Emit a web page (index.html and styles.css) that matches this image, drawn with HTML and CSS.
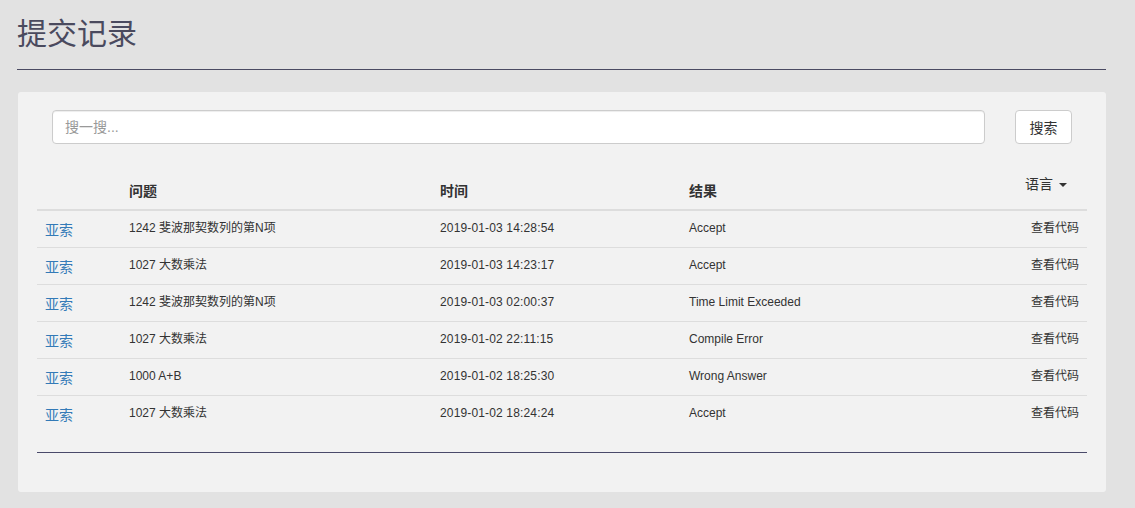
FILE: index.html
```html
<!DOCTYPE html>
<html lang="zh">
<head>
<meta charset="utf-8">
<title>提交记录</title>
<link rel="stylesheet" href="styles.css">
</head>
<body>
<div class="page">
  <h1 class="title">提交记录</h1>
  <hr class="rule">
  <div class="panel">
    <form class="search">
      <input class="search-input" type="text" placeholder="搜一搜...">
      <button class="search-btn" type="button">搜索</button>
    </form>
    <table class="records">
      <thead>
        <tr>
          <th class="c-user"></th>
          <th class="c-prob">问题</th>
          <th class="c-time">时间</th>
          <th class="c-res">结果</th>
          <th class="c-lang"><span class="lang">语言 <span class="caret"></span></span></th>
        </tr>
      </thead>
      <tbody>
        <tr><td><a class="user" href="#">亚索</a></td><td>1242 斐波那契数列的第N项</td><td class="time">2019-01-03 14:28:54</td><td>Accept</td><td class="code">查看代码</td></tr>
        <tr><td><a class="user" href="#">亚索</a></td><td>1027 大数乘法</td><td class="time">2019-01-03 14:23:17</td><td>Accept</td><td class="code">查看代码</td></tr>
        <tr><td><a class="user" href="#">亚索</a></td><td>1242 斐波那契数列的第N项</td><td class="time">2019-01-03 02:00:37</td><td>Time Limit Exceeded</td><td class="code">查看代码</td></tr>
        <tr><td><a class="user" href="#">亚索</a></td><td>1027 大数乘法</td><td class="time">2019-01-02 22:11:15</td><td>Compile Error</td><td class="code">查看代码</td></tr>
        <tr><td><a class="user" href="#">亚索</a></td><td>1000 A+B</td><td class="time">2019-01-02 18:25:30</td><td>Wrong Answer</td><td class="code">查看代码</td></tr>
        <tr><td><a class="user" href="#">亚索</a></td><td>1027 大数乘法</td><td class="time">2019-01-02 18:24:24</td><td>Accept</td><td class="code">查看代码</td></tr>
      </tbody>
    </table>
    <hr class="table-end">
  </div>
</div>
</body>
</html>
```

FILE: styles.css
```css
* { box-sizing: border-box; }
html, body {
  margin: 0;
  padding: 0;
  background: #e2e2e2;
}
body {
  font-family: "Liberation Sans", Arial, "Noto Sans CJK SC", sans-serif;
  font-size: 14px;
  line-height: 1.42857;
  color: #333;
}
.page {
  margin-left: 17px;
  width: 1089px;
  padding-top: 15px;
}
.title {
  margin: 0;
  font-size: 30px;
  font-weight: normal;
  line-height: 38px;
  color: #4a4a5e;
}
.rule {
  margin: 16px 0 0 0;
  border: 0;
  border-top: 1px solid #4a4a62;
  height: 0;
}
.panel {
  margin: 22px 0 0 1px;
  background: #f2f2f2;
  border-radius: 3px;
  padding: 18px 19px 39px 19px;
}
.search {
  display: flex;
  align-items: center;
  margin: 0 15px 0 15px;
  gap: 30px;
}
.search-input {
  flex: 1;
  height: 34px;
  border: 1px solid #ccc;
  border-radius: 4px;
  background: #fff;
  padding: 6px 12px;
  font-family: inherit;
  font-size: 14px;
  color: #555;
  box-shadow: inset 0 1px 1px rgba(0,0,0,.075);
}
.search-input::placeholder { color: #999; }
.search-btn {
  width: 57px;
  height: 34px;
  border: 1px solid #ccc;
  border-radius: 4px;
  background: #fff;
  font-family: inherit;
  font-size: 14px;
  color: #333;
  padding: 0;
}
.records {
  width: 100%;
  border-collapse: collapse;
  margin-top: 28px;
}
.records th {
  text-align: left;
  font-weight: bold;
  font-size: 14px;
  color: #333;
  padding: 8px 8px;
  line-height: 20px;
  height: 38px;
  vertical-align: bottom;
  border-bottom: 2px solid #ddd;
}
.records th.c-lang {
  text-align: right;
  padding: 1px 20px 15px 8px;
  font-weight: normal;
}
.lang { color: #333; }
.caret {
  display: inline-block;
  width: 0;
  height: 0;
  margin-left: 2px;
  vertical-align: middle;
  border-top: 4px solid #333;
  border-left: 4px solid transparent;
  border-right: 4px solid transparent;
}
.records td {
  padding: 7px 8px 9px 8px;
  height: 37px;
  font-size: 12px;
  line-height: 20px;
  color: #333;
  vertical-align: top;
  border-top: 1px solid #ddd;
}
.records tbody tr:first-child td { border-top: 0; height: 36px; }
.c-user { width: 84px; }
.c-prob { width: 311px; }
.c-time { width: 249px; }
.time { letter-spacing: 0.15px; }
.code { text-align: right; }
.user {
  display: inline-block;
  vertical-align: top;
  line-height: 20px;
  height: 20px;
  color: #337ab7;
  text-decoration: none;
  font-size: 14px;
  position: relative;
  top: 2px;
}
.table-end {
  margin: 19px 0 0 0;
  border: 0;
  border-top: 1px solid #4a4a6a;
  height: 0;
}
```
